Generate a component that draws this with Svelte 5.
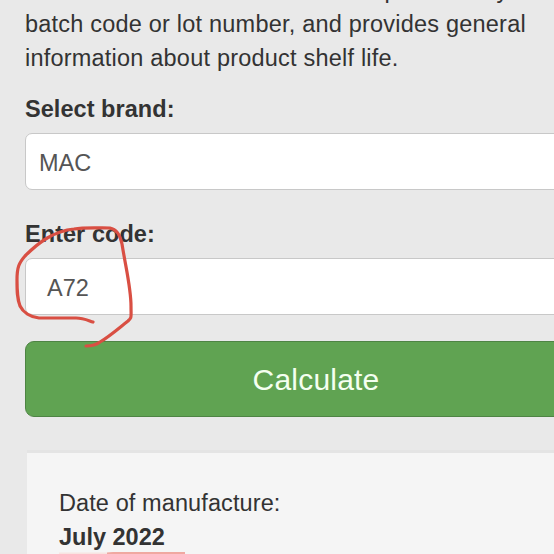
<script>
  let brand = "MAC";
  let code = "A72";
  let manufactured = "July 2022";
</script>

<main class="page">
  <p class="intro">
    This calculator decodes cosmetic products by<br />
    batch code or lot number, and provides general<br />
    information about product shelf life.
  </p>

  <form class="calc-form">
    <label for="brand">Select brand:</label>
    <div class="field" id="brand"><span>{brand}</span></div>

    <label for="code">Enter code:</label>
    <div class="field code" id="code">
      <span>{code}</span>
      <svg class="circle-mark" viewBox="0 0 130 130" width="130" height="130">
        <path
          d="M92 107C86 105 82 103 75 103L38 103C29 102 22 97 19 91C16 83 16 76 16 65C16 52 18 48 24 41C38 27 53 16 73 14C84 12 99 13 109 13C115 14 119 19 121 29C125 54 130 73 130 91C130 103 131 102 127 106C118 113 109 121 99 127C95 130 91 131 85 131"
        />
      </svg>
    </div>

    <button type="button">Calculate</button>
  </form>

  <section class="result">
    <p>Date of manufacture:</p>
    <strong>{manufactured}</strong>
    <svg class="underline-mark" viewBox="0 0 130 4" width="130" height="4">
      <path class="faint" d="M0 1.5H54V4H0Z" />
      <path d="M48 1.5L54 1H126V4H48Z" />
    </svg>
  </section>
</main>

<style>
  :global(body) {
    margin: 0;
    background: #e9e9e9;
  }

  .page {
    box-sizing: border-box;
    width: 554px;
    height: 554px;
    overflow: hidden;
    padding-left: 25px;
    background: #e9e9e9;
    color: #333;
    font-family: "Liberation Sans", Arial, sans-serif;
    font-size: 23.5px;
    line-height: 34px;
  }

  .intro {
    margin: -27px 0 17px;
    letter-spacing: 0.21px;
    white-space: nowrap;
  }

  label {
    display: block;
    height: 34px;
    margin-bottom: 7px;
    font-weight: 700;
    letter-spacing: 0.05px;
  }

  .field {
    position: relative;
    box-sizing: border-box;
    width: 580px;
    height: 57px;
    margin-bottom: 27px;
    padding: 12px 13px;
    border: 1px solid #c8c8c8;
    border-radius: 7px;
    background: #fff;
    color: #555;
  }

  .field.code {
    margin-bottom: 26px;
    padding-left: 21px;
  }

  .circle-mark {
    position: absolute;
    left: -25.5px;
    top: -44px;
    overflow: visible;
    fill: none;
    stroke: #d94f43;
    stroke-width: 3.2;
    stroke-linecap: round;
    stroke-linejoin: round;
  }

  button {
    display: block;
    box-sizing: border-box;
    width: 582px;
    height: 76px;
    padding: 2px 0 0;
    border: 1px solid #4e8444;
    border-radius: 9px;
    background: #60a352;
    color: #f4fff0;
    font-family: inherit;
    font-size: 30px;
    letter-spacing: 0.2px;
  }

  .result {
    position: relative;
    height: 130px;
    width: 580px;
    box-sizing: border-box;
    margin: 33px 0 0 2px;
    padding: 33px 32px;
    border-top: 3px solid #e4e4e4;
    background: #f5f5f5;
  }

  .result p {
    margin: 0;
    letter-spacing: 0.1px;
  }

  .underline-mark {
    position: absolute;
    left: 32px;
    top: 98px;
    fill: #f0a8a1;
  }

  .underline-mark .faint {
    fill: #f8e4e1;
  }
</style>
